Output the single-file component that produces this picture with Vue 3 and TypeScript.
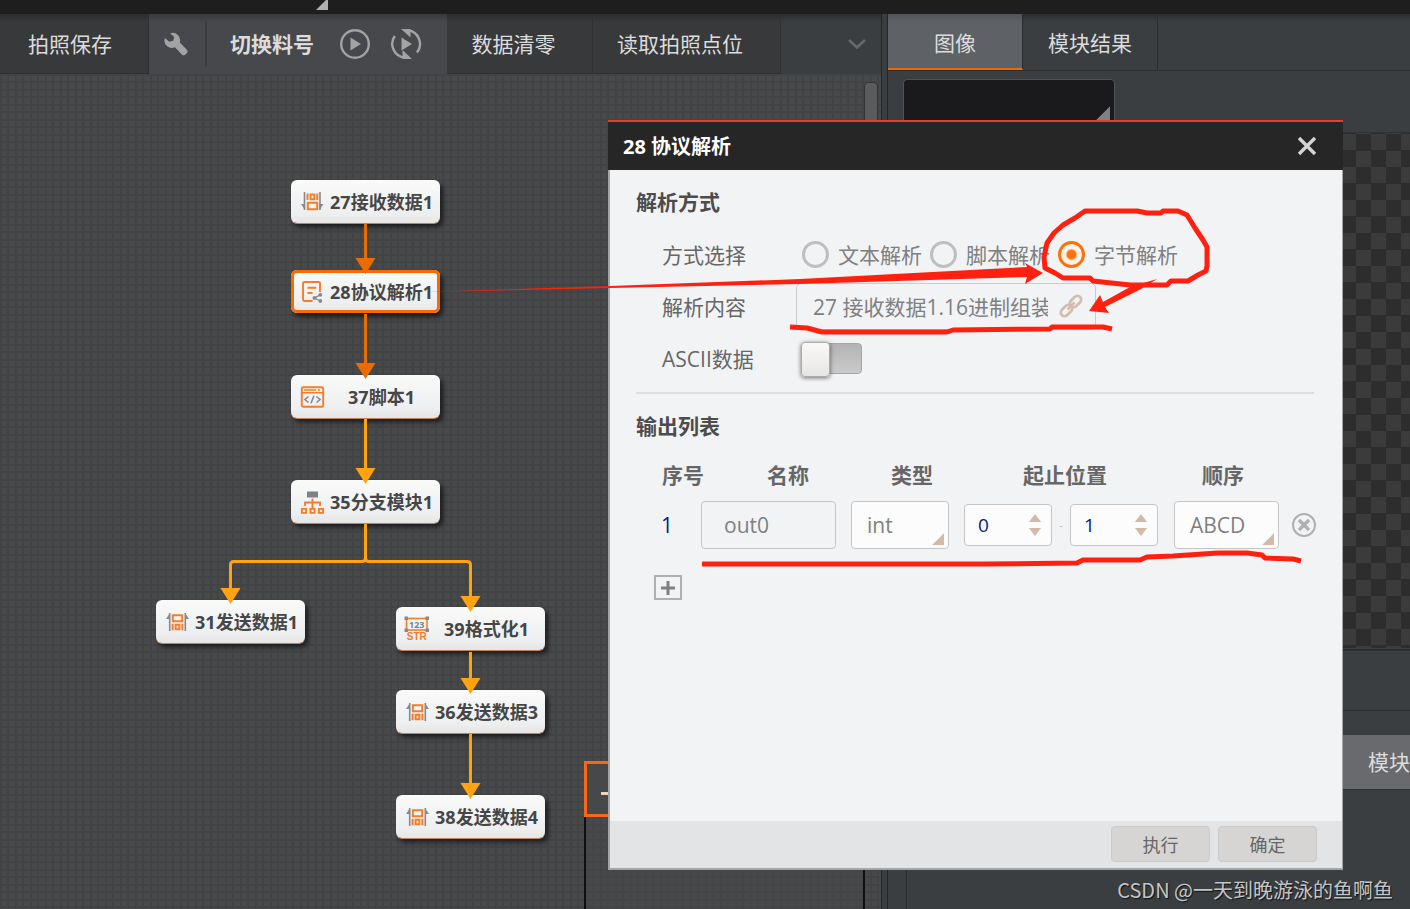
<script setup lang="ts">
import { ref } from 'vue'

type IconKind = 'receive' | 'send' | 'protocol' | 'script' | 'branch' | 'format'

interface FlowNode {
  id: number
  label: string
  icon: IconKind
  x: number
  y: number
  selected?: boolean
}

interface OutputRow {
  index: number
  name: string
  type: string
  from: number
  to: number
  order: string
}

const nodes: FlowNode[] = [
  { id: 27, label: '27接收数据1', icon: 'receive', x: 291, y: 106 },
  { id: 28, label: '28协议解析1', icon: 'protocol', x: 291, y: 196, selected: true },
  { id: 37, label: '37脚本1', icon: 'script', x: 291, y: 301 },
  { id: 35, label: '35分支模块1', icon: 'branch', x: 291, y: 406 },
  { id: 31, label: '31发送数据1', icon: 'send', x: 156, y: 526 },
  { id: 39, label: '39格式化1', icon: 'format', x: 396, y: 533 },
  { id: 36, label: '36发送数据3', icon: 'send', x: 396, y: 616 },
  { id: 38, label: '38发送数据4', icon: 'send', x: 396, y: 721 },
]

const modes = ['文本解析', '脚本解析', '字节解析']
const mode = ref('字节解析')
const source = ref('27 接收数据1.16进制组装')
const ascii = ref(false)
const rows = ref<OutputRow[]>([
  { index: 1, name: 'out0', type: 'int', from: 0, to: 1, order: 'ABCD' },
])

function addRow() {
  const n = rows.value.length
  rows.value.push({ index: n + 1, name: 'out' + n, type: 'int', from: 0, to: 1, order: 'ABCD' })
}
function removeRow(i: number) {
  rows.value.splice(i, 1)
}
</script>

<template>
  <div class="app">
    <header class="topbar">
      <svg class="corner" width="12" height="10" viewBox="0 0 12 10"><path d="M12 -2V10H0Z" fill="#b0b0b0" /></svg>
    </header>

    <div class="workspace">
      <section class="editor">
        <nav class="toolbar">
          <button class="tool save">拍照保存</button>
          <div class="tool-group">
            <button class="icon-btn wrench" aria-label="设置">
              <svg width="24" height="24" viewBox="0 0 24 24">
                <path d="M6.200 1.300A7.500 7.500 0 0 1 15.800 10.600L22.600 17.400A2.600 2.600 0 0 1 22.600 21.200L21.400 22.400A2.600 2.600 0 0 1 17.800 22.400L11 15.300A7.500 7.500 0 0 1 0.900 6L5.300 9.800L9.200 8.800L10.200 5Z" fill="#a3a3a3" />
              </svg>
            </button>
            <button class="tool switch">切换料号</button>
            <button class="icon-btn" aria-label="运行">
              <svg width="32" height="32" viewBox="0 0 32 32">
                <circle cx="16" cy="16" r="13.800" fill="none" stroke="#a3a3a3" stroke-width="2.400" />
                <path d="M11.500 9.500V22.500L22 16Z" fill="#a3a3a3" />
              </svg>
            </button>
            <button class="icon-btn loop" aria-label="循环运行">
              <svg width="32" height="32" viewBox="0 0 32 32">
                <path d="M4.800 8A13.800 13.800 0 0 0 15 29.700M18 2.300A13.800 13.800 0 0 1 27 24.500" fill="none" stroke="#a3a3a3" stroke-width="2.400" />
                <path d="M11.500 9.500V22.500L22 16Z" fill="#a3a3a3" />
                <path d="M11 1H20.500V9.500Z M12.500 22V31H22Z" fill="#a3a3a3" />
              </svg>
            </button>
          </div>
          <button class="tool clear">数据清零</button>
          <button class="tool read">读取拍照点位</button>
          <button class="icon-btn more" aria-label="更多">
            <svg width="18" height="12" viewBox="0 0 18 12"><path d="M1 2L9 9.500L17 2" fill="none" stroke="#66696c" stroke-width="2.600" /></svg>
          </button>
        </nav>

        <div class="canvas">
          <div class="scroll-thumb"></div>
          <div class="minimap"><div class="viewport"><span></span></div></div>

          <div
            v-for="n in nodes"
            :key="n.id"
            class="node"
            :class="{ selected: n.selected }"
            :style="{ left: n.x + 'px', top: n.y + 'px' }"
          >
            <svg class="node-icon" width="24" height="24" viewBox="0 0 24 24" fill="none">
              <template v-if="n.icon === 'receive'">
                <path d="M3.500 2V20M19 2V20" stroke="#858a90" stroke-width="1.600" />
                <path d="M0 14H4V20ZM22.500 14H18.500V20Z" fill="#858a90" />
                <path d="M6.500 3.500V10M16.300 3.500V10M9.500 4.400H13.300V9.200H9.500ZM6.800 12.800H16.200V19.200H6.800Z" stroke="#f57c28" stroke-width="2" />
              </template>
              <template v-else-if="n.icon === 'send'">
                <path d="M3.700 3V21M19.300 3V21" stroke="#858a90" stroke-width="1.600" />
                <path d="M0 9H4V3ZM23 9H19V3Z" fill="#858a90" />
                <path d="M6.600 13.800V20.200M16.400 13.800V20.200M9.600 14.800H13.400V19.300H9.600ZM6.800 5.300H16.200V11.300H6.800Z" stroke="#f57c28" stroke-width="2" />
              </template>
              <template v-else-if="n.icon === 'protocol'">
                <path d="M19 12V3.500Q19 2 17.500 2H3.500Q2 2 2 3.500V19.500Q2 21 3.500 21H11.500M6.500 7.700H15.300M6.500 13H11.500" stroke="#f57c28" stroke-width="1.900" />
                <path d="M19.300 14.800L13.500 18L19.300 21" stroke="#858a90" stroke-width="1.400" />
                <g fill="#858a90"><circle cx="13.500" cy="18" r="2" /><circle cx="19.300" cy="14.800" r="1.900" /><circle cx="19.300" cy="21" r="1.900" /></g>
              </template>
              <template v-else-if="n.icon === 'script'">
                <rect x="0.800" y="2.200" width="21.400" height="19.600" rx="1.500" stroke="#f57c28" stroke-width="1.900" />
                <path d="M1 7.800H22M3 4.900H15M17 4.900H19" stroke="#f57c28" stroke-width="1.500" />
                <path d="M7.500 11.500L4 14.500L7.500 17.500M15.500 11.500L19 14.500L15.500 17.500M13 10.800L10 18.200" stroke="#858a90" stroke-width="1.600" />
              </template>
              <template v-else-if="n.icon === 'branch'">
                <rect x="6" y="1.500" width="11" height="6" fill="#7d8288" />
                <path d="M11.500 8.500V18M4 16V12.500H19V16M0.900 18.900H5.100V22.900H0.900ZM9.400 18.900H13.600V22.900H9.400ZM17.900 18.900H22.100V22.900H17.900Z" stroke="#f57c28" stroke-width="1.900" />
              </template>
              <template v-else>
                <rect x="0.500" y="1.500" width="20.500" height="11.500" stroke="#f57c28" stroke-width="1.600" />
                <path d="M-1.500 -0.500H2V3H-1.500ZM19.500 -0.500H23V3H19.500ZM-1.500 11.500H2V15H-1.500ZM19.500 11.500H23V15H19.500Z" fill="#858a90" />
                <text x="10.800" y="10.500" text-anchor="middle" class="num" fill="#7d8288">123</text>
                <text x="10.800" y="23" text-anchor="middle" class="str" fill="#f57c28">STR</text>
              </template>
            </svg>
            <span class="node-label">{{ n.label }}</span>
          </div>

          <svg class="edges" width="600" height="835" viewBox="0 74 600 835" fill="none">
            <g stroke="#e86c00" stroke-width="3"><path d="M365.500 224V260M365.500 314V365" /></g>
            <path d="M355.500 258H375.500L365.500 274ZM355.500 363H375.500L365.500 379Z" fill="#e86c00" />
            <path d="M365.500 419V470M365.500 524V558Q365.500 561.500 362 561.500H234Q230.500 561.500 230.500 565V590M365.500 558Q365.500 561.500 369 561.500H467Q470.500 561.500 470.500 565V598M470.500 652V680M470.500 734V785" stroke="#ffa311" stroke-width="3" />
            <path d="M355.500 468H375.500L365.500 484ZM220.500 588H240.500L230.500 604ZM460.500 596H480.500L470.500 612ZM460.500 678H480.500L470.500 694ZM460.500 783H480.500L470.500 799Z" fill="#ffa311" />
          </svg>
        </div>
      </section>

      <section class="viewer">
        <nav class="tabs">
          <button class="tab active">图像</button>
          <button class="tab">模块结果</button>
        </nav>
        <div class="picker-row">
          <select class="picker" aria-label="图像源"><option></option></select>
        </div>
        <div class="checker"></div>
        <div class="strip"></div>
        <div class="result-tabs"><button class="result-tab">模块</button></div>
        <div class="result-body"></div>
      </section>
    </div>

    <section class="dialog" role="dialog" aria-labelledby="dlg-title">
      <header class="dialog-head">
        <h1 id="dlg-title">28 协议解析</h1>
        <button class="close" aria-label="关闭">
          <svg width="20" height="20" viewBox="0 0 20 20"><path d="M2 2L18 18M18 2L2 18" stroke="#d4d4d4" stroke-width="3.400" /></svg>
        </button>
      </header>

      <div class="dialog-body">
        <h2>解析方式</h2>
        <div class="form">
          <div class="field">
            <span class="field-label">方式选择</span>
            <div class="radios" role="radiogroup" aria-label="方式选择">
              <label v-for="m in modes" :key="m" class="radio">
                <input v-model="mode" type="radio" name="mode" :value="m" />{{ m }}
              </label>
            </div>
          </div>
          <div class="field">
            <label class="field-label" for="src">解析内容</label>
            <div class="source">
              <input id="src" v-model="source" type="text" readonly />
              <button class="link" aria-label="链接">
                <svg width="26" height="26" viewBox="0 0 26 26" fill="none" stroke="#d5bdae" stroke-width="2.800">
                  <rect x="-6.500" y="-3.800" width="13" height="7.600" rx="3.800" transform="translate(17.500 8.500) rotate(-45)" />
                  <rect x="-6.500" y="-3.800" width="13" height="7.600" rx="3.800" transform="translate(8.500 17.500) rotate(-45)" />
                  <path d="M9.500 16.500L16.500 9.500" />
                </svg>
              </button>
            </div>
          </div>
          <div class="field">
            <label class="field-label" for="ascii">ASCII数据</label>
            <input id="ascii" v-model="ascii" class="toggle" type="checkbox" role="switch" />
          </div>
        </div>
        <hr />
        <h2>输出列表</h2>
        <table>
          <colgroup>
            <col class="c-index" /><col class="c-name" /><col class="c-type" /><col class="c-range" /><col class="c-order" /><col />
          </colgroup>
          <thead>
            <tr>
              <th class="h-index">序号</th>
              <th class="h-name">名称</th>
              <th class="h-type">类型</th>
              <th class="h-range">起止位置</th>
              <th class="h-order">顺序</th>
              <th></th>
            </tr>
          </thead>
          <tbody>
            <tr v-for="(r, i) in rows" :key="r.index">
              <td class="index">{{ r.index }}</td>
              <td><input v-model="r.name" class="name" type="text" aria-label="名称" /></td>
              <td>
                <select v-model="r.type" class="type" aria-label="类型"><option>int</option><option>float</option></select>
              </td>
              <td>
                <div class="range">
                  <div class="spin">
                    <input v-model.number="r.from" type="number" aria-label="起始位置" />
                    <div class="arrows">
                      <button class="up" aria-label="增加" @click="r.from++"></button>
                      <button class="down" aria-label="减少" @click="r.from--"></button>
                    </div>
                  </div>
                  <span class="dash">-</span>
                  <div class="spin">
                    <input v-model.number="r.to" type="number" aria-label="终止位置" />
                    <div class="arrows">
                      <button class="up" aria-label="增加" @click="r.to++"></button>
                      <button class="down" aria-label="减少" @click="r.to--"></button>
                    </div>
                  </div>
                </div>
              </td>
              <td>
                <select v-model="r.order" class="order" aria-label="顺序"><option>ABCD</option><option>DCBA</option></select>
              </td>
              <td>
                <button class="remove" aria-label="删除" @click="removeRow(i)">
                  <svg width="26" height="26" viewBox="0 0 26 26" fill="none" stroke="#b0b0b0">
                    <circle cx="13" cy="13" r="11" stroke-width="2" />
                    <path d="M8 8L18 18M18 8L8 18" stroke-width="3.400" />
                  </svg>
                </button>
              </td>
            </tr>
          </tbody>
        </table>
        <button class="add" aria-label="添加" @click="addRow">
          <svg width="16" height="16" viewBox="0 0 16 16"><path d="M8 1V15M1 8H15" stroke="#808080" stroke-width="3" /></svg>
        </button>
      </div>

      <footer class="dialog-foot">
        <button>执行</button>
        <button>确定</button>
      </footer>
    </section>

    <svg class="marks" width="1410" height="909" viewBox="0 0 1410 909" fill="none" stroke-linejoin="round">
      <path d="M1085 211H1137L1147 213H1161L1163 211H1178L1187 215L1195 228L1203 240L1207 247V266L1206 271L1198 275L1188 281H1171L1167 285H1130L1093 281L1090 278H1063L1055 273L1045 268L1044 257L1047 243L1054 233L1063 225L1075 218Z" stroke="#ff2010" stroke-width="5" />
      <path d="M790 327L807 328L822 332H947L953 330L1050 329L1052 327H1103L1112 329M702 564H984L1077 563L1083 560H1140L1147 557L1173 556L1218 553H1247L1262 555L1265 558L1293 559L1301 561" stroke="#ff2010" stroke-width="5" />
      <path d="M425 292L610 286L800 279L1027 267L1025 263L1043 273L1025 284L1027 277L800 284L610 288Z" fill="#ff2010" />
      <path d="M1157 279L1130 287L1103 302L1100 295L1089 311L1109 313L1105 307L1141 289Z" fill="#ff2010" />
    </svg>

    <p class="watermark">CSDN @一天到晚游泳的鱼啊鱼</p>
  </div>
</template>

<style>
body {
  margin: 0;
  background: #3b3e41;
}
</style>

<style scoped>
* {
  box-sizing: border-box;
}
.app {
  position: relative;
  display: flex;
  flex-direction: column;
  min-height: 100vh;
  overflow: hidden;
  font-family: "Open Sans", "Noto Sans CJK SC", sans-serif;
  font-size: 21px;
  color: #dcdcdc;
}
button,
input,
select {
  font: inherit;
  color: inherit;
  margin: 0;
  padding: 0;
  border: 0;
  border-radius: 0;
  background: none;
  appearance: none;
  outline: 0;
}
button svg {
  display: block;
}
.topbar {
  height: 14px;
  background: #1e1e1e;
}
.corner {
  display: block;
  margin-left: 316px;
}
.workspace {
  flex: 1;
  display: grid;
  grid-template-columns: 887fr 523fr;
}

/* flow editor */
.editor {
  display: flex;
  flex-direction: column;
  min-width: 0;
  border-right: 5px solid #3b3e41;
}
.toolbar {
  display: flex;
  height: 60px;
  background: linear-gradient(#2c2d2f, #3b3e41 8px);
  border-right: 1px solid #232527;
}
.tool {
  padding: 0 24px 2px;
  background: linear-gradient(#2c2d2f, #38393b 8px);
  border-right: 1px solid #2e3032;
  border-bottom: 1px solid #2e3032;
  white-space: nowrap;
}
.tool.save {
  width: 149px;
  padding: 0 36px 2px 28px;
}
.tool.clear {
  width: 146px;
  padding: 0 36px 2px 24px;
}
.tool.read {
  width: 188px;
  padding: 0 37px 2px 24px;
}
.tool-group {
  display: flex;
  align-items: center;
  width: 298px;
  background: linear-gradient(#38393b, #47484b 8px);
}
.tool.switch {
  padding: 0 25px 2px 23px;
  background: none;
  border: 0;
  font-weight: 700;
}
.wrench {
  height: 46px;
  padding: 0 17px 0 15px;
  border-right: 2px solid #3a3b3d;
}
.loop {
  margin-left: 19px;
}
.more {
  margin-left: auto;
  padding-right: 15px;
}
.canvas {
  position: relative;
  flex: 1;
  overflow: hidden;
  border-right: 1px solid #232527;
  background-color: #48494b;
  background-image:
    linear-gradient(90deg, #424345 2px, transparent 2px 7px, #424345 7px 9px, transparent 9px),
    linear-gradient(#424345 2px, transparent 2px 7px, #424345 7px 9px, transparent 9px);
  background-size: 15px 15px;
}
.scroll-thumb {
  position: absolute;
  top: 8px;
  right: 3px;
  width: 14px;
  height: 400px;
  border: 1px solid #343537;
  border-radius: 4px;
  background: #5a5b5d;
}
.minimap {
  position: absolute;
  left: 584px;
  right: 16px;
  top: 687px;
  bottom: 0;
  border-left: 2px solid #101010;
  border-right: 2px solid #101010;
  background: rgba(70, 71, 74, 0.5);
}
.viewport {
  display: flex;
  align-items: center;
  width: 120px;
  height: 56px;
  margin-left: -2px;
  padding: 8px 0 0 14px;
  border: 3px solid #f96816;
  background: #47484a;
}
.viewport span {
  width: 14px;
  height: 3px;
  background: #f3d3b8;
}
.node {
  position: absolute;
  display: flex;
  align-items: center;
  width: 149px;
  height: 43px;
  padding-left: 10px;
  border-radius: 6px;
  background: linear-gradient(#fafaf9, #eceef0 80%, #e8e4e2);
  box-shadow: 0 1px 0 #c38254, 3px 4px 5px rgba(0, 0, 0, 0.6);
  color: #464646;
  font-size: 18px;
  font-weight: 700;
}
.node.selected {
  box-shadow: inset 0 0 0 3px #f96b00, 3px 4px 5px rgba(0, 0, 0, 0.6);
}
.node-icon {
  flex: none;
  overflow: visible;
}
.node-label {
  flex: 1;
  padding: 0 2px 2px 0;
  text-align: center;
  white-space: nowrap;
}
.num {
  font-size: 9px;
}
.str {
  font-family: "Liberation Sans", sans-serif;
  font-size: 10px;
}
.edges {
  position: absolute;
  left: 0;
  top: 0;
}

/* image viewer */
.viewer {
  display: flex;
  flex-direction: column;
  min-width: 0;
  background: #3b3e41;
  border-left: 1px solid #232527;
}
.tabs {
  display: flex;
  height: 57px;
  background: linear-gradient(#2c2d2f, #3b3e41 8px);
  border-bottom: 1px solid #2a2c2e;
}
.tab {
  width: 135px;
  border-right: 1px solid #2a2c2e;
}
.tab.active {
  padding-top: 2px;
  background: linear-gradient(#505357, #5e6166 8px);
  border-bottom: 2px solid #f06a00;
}
.picker-row {
  height: 62px;
  padding: 8px 15px 0;
  border-bottom: 1px solid #303234;
}
.picker {
  width: 212px;
  height: 46px;
  border: 1px solid #505356;
  border-radius: 4px;
  background: linear-gradient(135deg, transparent 49%, #7f8183 53%) no-repeat right 4px bottom 4px / 14px 14px #1a1a1c;
}
.checker {
  height: 515px;
  background: repeating-conic-gradient(#3b3b3b 0 25%, #2d2d2d 0 50%) 18px 1px / 30px 33px;
}
.strip {
  height: 62px;
  margin-top: 1px;
  border-top: 2px solid #2b2d2f;
  border-bottom: 1px solid #2b2d2f;
}
.result-tabs {
  display: flex;
  height: 79px;
  padding: 24px 0 0 450px;
  border-bottom: 1px solid #2e3032;
}
.result-tab {
  flex: 1;
  padding: 0 0 2px 30px;
  background: #696a6e;
  text-align: left;
  white-space: nowrap;
}
.result-body {
  flex: 1;
  margin-left: 18px;
  border-left: 1px solid #2b2d2f;
}

/* dialog */
.dialog {
  position: absolute;
  left: 608px;
  top: 120px;
  width: 735px;
  display: flex;
  flex-direction: column;
  border: 2px solid #a5a5a5;
  border-top: 0;
  border-right-width: 1px;
  background: #f2f3f5;
  color: #666;
}
.dialog-head {
  display: flex;
  align-items: center;
  justify-content: space-between;
  height: 50px;
  margin: 0 -1px 0 -2px;
  padding: 0 26px 0 15px;
  border-top: 2px solid #e5402f;
  background: #262626;
  color: #fff;
}
h1,
h2 {
  margin: 0;
  font-size: 20px;
  font-weight: 700;
}
h1 {
  padding-bottom: 2px;
}
h2 {
  font-size: 21px;
  line-height: 30px;
  color: #4c4c4c;
}
.dialog-body {
  min-height: 651px;
  padding: 17px 28px 20px 26px;
}
.form {
  padding: 11px 0 0 26px;
}
.field {
  display: flex;
  align-items: center;
  height: 52px;
}
.field-label {
  width: 134px;
}
.radios {
  display: flex;
  gap: 8px;
  padding-left: 6px;
  color: #808080;
}
.radio {
  display: flex;
  align-items: center;
  gap: 9px;
  white-space: nowrap;
}
.radio input {
  width: 27px;
  height: 27px;
  border: 3px solid #bfbfbf;
  border-radius: 50%;
}
.radio input:checked {
  border-color: #f97306;
  background: radial-gradient(circle, #f97306 4px, #fdf0e6 6px);
}
.source {
  display: flex;
  align-items: center;
  width: 300px;
  height: 47px;
  padding-left: 16px;
  border: 1px solid #ccc;
  border-radius: 5px;
  color: #808080;
}
.source input {
  width: 235px;
  height: 40px;
}
.link {
  margin-left: 10px;
}
.toggle {
  position: relative;
  width: 61px;
  height: 31px;
  margin-left: 5px;
  border: 1px solid #a5a5a5;
  border-radius: 4px;
  background: linear-gradient(#b3b3b3, #cacaca);
}
.toggle::before {
  content: "";
  position: absolute;
  left: -1px;
  top: -2px;
  width: 27px;
  height: 33px;
  border: 1px solid #aaa;
  border-radius: 4px;
  background: linear-gradient(#fbf8f6, #e6e6e6);
  box-shadow: 0 1px 4px rgba(0, 0, 0, 0.55);
}
.toggle:checked::before {
  left: 33px;
}
hr {
  height: 2px;
  margin: 8px 0 17px;
  border: 0;
  background: #dedddc;
}
table {
  width: 100%;
  margin-top: 14px;
  border-collapse: collapse;
  table-layout: fixed;
}
.c-index { width: 65px; }
.c-name { width: 150px; }
.c-type { width: 113px; }
.c-range { width: 210px; }
.c-order { width: 117px; }
th {
  height: 41px;
  padding: 0;
  line-height: 30px;
  text-align: left;
  vertical-align: top;
  padding-top: 5px;
  white-space: nowrap;
}
.h-index { padding-left: 26px; }
.h-name { padding-left: 66px; }
.h-type { padding-left: 40px; }
.h-range { padding-left: 59px; }
.h-order { padding-left: 28px; }
td {
  height: 58px;
  padding: 0;
}
.index {
  padding-left: 25px;
  color: #00237f;
}
td input,
td select {
  display: block;
}
.name,
.type,
.order {
  height: 48px;
  border: 1px solid #c6c6c6;
  border-radius: 4px;
  color: #808080;
}
.name {
  width: 135px;
  padding-left: 22px;
}
.type,
.order {
  width: 98px;
  padding-left: 15px;
  background: linear-gradient(135deg, transparent 48%, #d5b8a5 54%) no-repeat right 4px bottom 3px / 12px 12px #fcfcfc;
}
.order {
  width: 105px;
}
.range {
  display: flex;
  align-items: center;
}
.spin {
  display: flex;
  align-items: center;
  width: 88px;
  height: 42px;
  padding: 0 10px 0 13px;
  border: 1px solid #c6c6c6;
  border-radius: 4px;
  background: #fcfcfc;
  color: #00237f;
}
.spin input {
  flex: 1;
  min-width: 0;
  font-size: 19px;
  appearance: textfield;
}
.spin input::-webkit-inner-spin-button {
  appearance: none;
}
.arrows {
  display: grid;
  gap: 6px;
}
.up,
.down {
  width: 12px;
  height: 8px;
  background: #d5b8a5;
  clip-path: polygon(50% 0, 100% 100%, 0 100%);
}
.down {
  clip-path: polygon(0 0, 100% 0, 50% 100%);
}
.dash {
  width: 18px;
  color: #c6c6c6;
  font-size: 12px;
  text-align: center;
}
.remove {
  display: block;
}
.add {
  display: flex;
  align-items: center;
  justify-content: center;
  width: 28px;
  height: 25px;
  margin: 21px 0 0 18px;
  border: 2px solid #b0b0b0;
}
.dialog-foot {
  display: flex;
  justify-content: flex-end;
  gap: 8px;
  padding: 5px 25px 6px;
  background: #e3e4e6;
}
.dialog-foot button {
  width: 99px;
  height: 36px;
  border: 1px solid #cbcbcb;
  border-radius: 4px;
  background: #d6d5d4;
  font-size: 18px;
}

/* hand-drawn marks and credit */
.marks {
  position: absolute;
  left: 0;
  top: 0;
  pointer-events: none;
}
.watermark {
  position: absolute;
  right: 17px;
  bottom: 4px;
  margin: 0;
  font-family: "Noto Sans CJK SC", sans-serif;
  font-size: 20px;
  line-height: 30px;
  color: #c4c5c6;
  text-shadow: 1px 1px 1px #111;
  white-space: nowrap;
}
</style>
